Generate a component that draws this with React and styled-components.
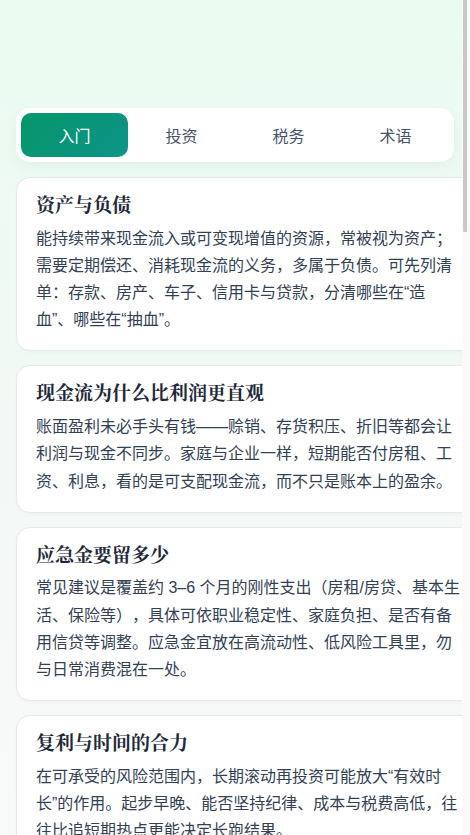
import React, { useState } from 'react';
import styled, { createGlobalStyle } from 'styled-components';

const bodyFont = `"Liberation Sans", "Noto Sans CJK SC", sans-serif`;

const GlobalStyle = createGlobalStyle`
  html, body {
    margin: 0;
    padding: 0;
    height: 100%;
    overflow: hidden;
  }
  body {
    font-family: ${bodyFont};
    color: #334155;
    text-spacing-trim: space-all;
  }
`;

const Page = styled.div`
  box-sizing: border-box;
  height: 100vh;
  overflow-y: auto;
  overflow-x: hidden;
  background: linear-gradient(180deg, #eafcf2 0%, #f0f9f4 35%, #f5f8f7 70%, #f8fafa 100%);
`;

const Inner = styled.div`
  /* the scroll track sits over the right edge */
  margin-right: 5px;
  padding: 108px 0 40px;
`;

const ScrollTrack = styled.div`
  position: fixed;
  top: 0;
  right: 0;
  width: 8px;
  height: 100vh;
  background: #fafafa;
  z-index: 10;
`;

const ScrollThumb = styled.div`
  margin-left: 1px;
  width: 4px;
  height: 232px;
  background: #c8c8c8;
  border-radius: 0 0 1px 1px;
`;

const TabBar = styled.nav`
  box-sizing: border-box;
  width: calc(100vw - 32px);
  margin: 0 16px 15px;
  padding: 5px;
  display: grid;
  grid-template-columns: repeat(4, 1fr);
  background: #ffffff;
  border-radius: 14px;
  box-shadow: 0 4px 14px rgba(15, 60, 40, 0.06);
`;

const Tab = styled.button`
  height: 44px;
  border: 0;
  border-radius: 10px;
  font-family: ${bodyFont};
  font-size: 16px;
  cursor: pointer;
  color: ${(p) => (p.$active ? '#ffffff' : '#475569')};
  background: ${(p) =>
    p.$active ? 'linear-gradient(135deg, #059669 0%, #0d9488 100%)' : 'transparent'};
`;

const CardList = styled.div`
  box-sizing: border-box;
  width: 100%;
  margin-left: 16px;
  display: flex;
  flex-direction: column;
  gap: 14px;
`;

const Card = styled.article`
  box-sizing: border-box;
  padding: 16px 19px 17px;
  background: #ffffff;
  border: 1px solid #e5ebe8;
  border-radius: 14px;
  box-shadow: 0 1px 3px rgba(15, 40, 30, 0.03);
`;

const CardTitle = styled.h3`
  margin: 0 0 6px;
  font-family: "Liberation Serif", "Noto Serif CJK SC", serif;
  font-size: 19px;
  line-height: 1.3;
  font-weight: 700;
  color: #1e293b;
`;

const CardText = styled.p`
  margin: 0;
  font-size: 16px;
  line-height: 1.7;
  color: #334155;
  text-spacing-trim: space-all;
`;

const tabs = ['入门', '投资', '税务', '术语'];

const cards = [
  {
    title: '资产与负债',
    text: '能持续带来现金流入或可变现增值的资源，常被视为资产；需要定期偿还、消耗现金流的义务，多属于负债。可先列清单：存款、房产、车子、信用卡与贷款，分清哪些在“造血”、哪些在“抽血”。',
  },
  {
    title: '现金流为什么比利润更直观',
    text: '账面盈利未必手头有钱——赊销、存货积压、折旧等都会让利润与现金不同步。家庭与企业一样，短期能否付房租、工资、利息，看的是可支配现金流，而不只是账本上的盈余。',
  },
  {
    title: '应急金要留多少',
    text: '常见建议是覆盖约 3–6 个月的刚性支出（房租/房贷、基本生活、保险等），具体可依职业稳定性、家庭负担、是否有备用信贷等调整。应急金宜放在高流动性、低风险工具里，勿与日常消费混在一处。',
  },
  {
    title: '复利与时间的合力',
    text: '在可承受的风险范围内，长期滚动再投资可能放大“有效时长”的作用。起步早晚、能否坚持纪律、成本与税费高低，往往比追短期热点更能决定长跑结果。',
  },
  {
    title: '预算的基本做法',
    text: '先记录一到两个月的真实开销，再按必要支出、弹性支出与储蓄目标分组。预算不是为了苛刻限制，而是让每一笔钱都有去处，月底复盘差异，逐步调整到可长期执行的比例。',
  },
  {
    title: '通货膨胀与购买力',
    text: '物价持续上涨时，同样金额能买到的东西会变少。长期闲置的现金会被悄悄侵蚀，因此在保证流动性的前提下，可以考虑让部分资金获得不低于通胀的回报。',
  },
  {
    title: '风险与收益的关系',
    text: '预期收益越高的资产，通常伴随更大的波动与亏损可能。没有只赚不赔的投资，关键在于清楚自己能承受多大回撤，再据此决定配置比例，而不是只盯着历史最高收益。',
  },
  {
    title: '分散投资的意义',
    text: '把资金分布在不同资产、行业与地区，可以降低单一事件造成的冲击。分散不能消除所有风险，却能减少“押错一次全盘皆输”的情况，让组合的波动更可控。',
  },
  {
    title: '信用记录为什么重要',
    text: '按时还款、合理使用额度会逐步积累良好的信用记录，影响日后申请房贷、车贷的利率与额度。逾期、频繁申请借贷都可能留下不良痕迹，修复往往需要较长时间。',
  },
  {
    title: '保险的基本定位',
    text: '保险的核心作用是转移自己难以承担的大额损失，如重疾、意外与身故风险。先保障家庭经济支柱，再考虑其他成员；理财型产品可另行评估，不宜与保障需求混为一谈。',
  },
  {
    title: '利率如何影响生活',
    text: '利率上升时，存款收益可能提高，但贷款成本也随之增加；利率下降则相反。关注浮动利率贷款的重定价周期，有助于提前规划月供变化，避免现金流突然吃紧。',
  },
  {
    title: '设定清晰的财务目标',
    text: '把“多存点钱”改写成具体、可衡量、有期限的目标，例如三年内攒够首付的一半。目标越清晰，越容易拆解成每月储蓄额，也更便于定期检查进度、及时纠偏。',
  },
  {
    title: '警惕常见的理财陷阱',
    text: '承诺保本高收益、拉人头返利、催促立刻转账的项目要格外小心。投资前核实机构资质与产品说明，看不懂的不碰，不因熟人推荐或短期赚钱效应而放松判断。',
  },
  {
    title: '养老规划越早越轻松',
    text: '退休后收入来源减少，而生活与医疗支出仍在持续。提早了解社保与个人养老账户的规则，结合自身情况逐年积累，比临近退休时再集中准备压力小得多。',
  },
];

export default function App() {
  const [active, setActive] = useState(0);

  return (
    <>
      <GlobalStyle />
      <Page>
        <Inner>
          <TabBar>
            {tabs.map((t, i) => (
              <Tab key={t} $active={i === active} onClick={() => setActive(i)}>
                {t}
              </Tab>
            ))}
          </TabBar>
          <CardList>
            {cards.map((c) => (
              <Card key={c.title}>
                <CardTitle>{c.title}</CardTitle>
                <CardText>{c.text}</CardText>
              </Card>
            ))}
          </CardList>
        </Inner>
      </Page>
      <ScrollTrack>
        <ScrollThumb />
      </ScrollTrack>
    </>
  );
}
